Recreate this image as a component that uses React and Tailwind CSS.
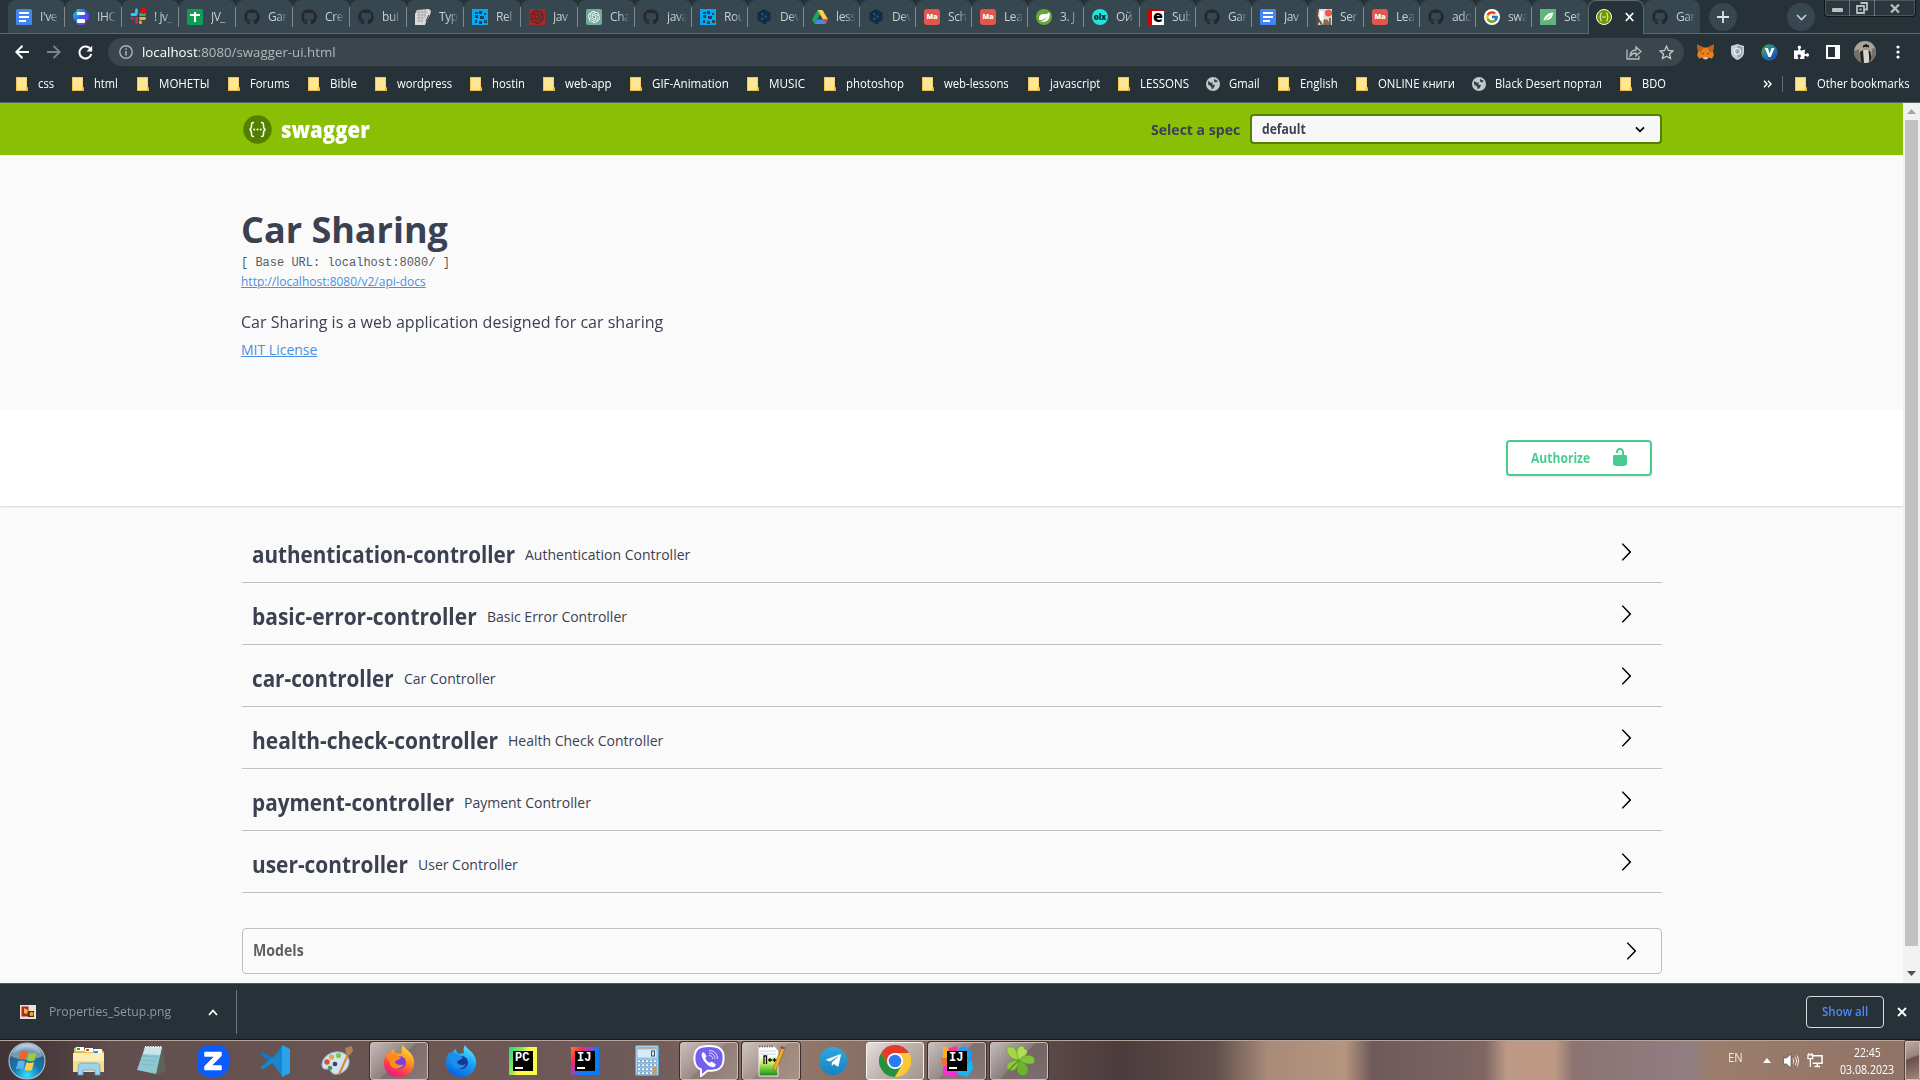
import React, { useLayoutEffect, useRef, useState } from "react";
import { FaGithub, FaPuzzlePiece, FaTelegramPlane } from "react-icons/fa";
import { FcGoogle } from "react-icons/fc";
import { SiOpenai } from "react-icons/si";

// Text squeezed or stretched horizontally to an exact width.
function Fit({ w, className = "", inner = "", children }) {
  const ref = useRef(null);
  const [scale, setScale] = useState(1);
  useLayoutEffect(() => {
    setScale(w / ref.current.offsetWidth);
  }, [w, children]);
  return (
    <span className={"inline-block shrink-0 whitespace-nowrap " + className} style={{ width: w }}>
      <span ref={ref} className={"inline-block origin-left " + inner} style={{ transform: `scaleX(${scale})` }}>
        {children}
      </span>
    </span>
  );
}

/* ---------- favicons ---------- */
const Docs = () => (
  <svg width="16" height="16" viewBox="0 0 16 16"><rect width="16" height="16" rx="1.5" fill="#4285f4" /><path d="M3 4h10M3 8h10M3 12h7" stroke="#fff" strokeWidth="2" /></svg>
);
const Printer = () => (
  <svg width="16" height="16" viewBox="0 0 16 16"><defs><linearGradient id="pr" x1="0" y1="0" x2="1" y2="1"><stop offset="0" stopColor="#12d7e6" /><stop offset=".5" stopColor="#3d5af0" /><stop offset="1" stopColor="#8a2be2" /></linearGradient></defs><rect y="2" width="16" height="11" rx="5" fill="url(#pr)" /><rect x="3" width="10" height="16" rx="3" fill="url(#pr)" /><rect x="4" y="3" width="8" height="3" rx="1" fill="#fff" /><rect x="4" y="10" width="8" height="4" rx="1" fill="#fff" /></svg>
);
const Slack = () => (
  <svg width="17" height="17" viewBox="0 0 17 17" strokeWidth="2.8" strokeLinecap="round"><path d="M2 6.5h4" stroke="#36c5f0" /><path d="M10.5 10.5h4" stroke="#ecb22e" /><path d="M10.5 6.5h4" stroke="#2eb67d" /><path d="M2 10.5h.5M6.5 10.5v4" stroke="#e01e5a" /><path d="M6.5 2v2.5" stroke="#36c5f0" /><path d="M10.5 14v.8" stroke="#ecb22e" /><circle cx="13.5" cy="3" r="3" fill="#f00" /></svg>
);
const Sheets = () => (
  <svg width="16" height="16" viewBox="0 0 16 16"><rect width="16" height="16" rx="1.5" fill="#0f9d58" /><path d="M3 6h10M8 3v10" stroke="#fff" strokeWidth="2" /></svg>
);
const Github = () => <FaGithub size={16} color="#24292e" />;
const Typing = () => (
  <svg width="16" height="16" viewBox="0 0 16 16"><path d="M2 1l12-1 2 2-1 4-4 7-1 3H0V5z" fill="#d9d9d9" /><path d="M2 3h10M2 6h9M2 9h7M2 12h6M4 1v12M7 1v12M10 1v8" stroke="#a3a3a3" strokeWidth=".8" /><path d="M11 12l3-6" stroke="#333" /></svg>
);
const Blocks = () => (
  <svg width="16" height="16" viewBox="0 0 16 16"><rect width="16" height="16" fill="#03a9f4" /><path d="M3 3h3v2H3zM7 2h3v3H7zM3 6h3v3H3zM8 7h4v3H8zM3 11h2v3H3zM7 12h3v3H7zM12 11h3v3h-3zM12 4h2v2h-2z" fill="#1c4557" /></svg>
);
const RedAi = () => (
  <span className="flex size-4 items-center justify-center bg-[#a52a25]"><SiOpenai size={14} color="#43272b" /></span>
);
const Gpt = () => (
  <span className="flex size-4 items-center justify-center rounded-[2px] bg-[#74aa9c]"><SiOpenai size={12} color="#fff" /></span>
);
const DeepL = () => (
  <svg width="16" height="16" viewBox="0 0 16 16"><path d="M8 0l6.500 3.700v7.300L10 13.600V16l-3.500-2L1.500 11V3.700z" fill="#0f2b46" /><path d="M6 5l4 2.500L6 10" fill="none" stroke="#284a6c" /><circle cx="6" cy="5" r="1" fill="#3a5c80" /><circle cx="10" cy="7.500" r="1" fill="#3a5c80" /><circle cx="6" cy="10" r="1" fill="#3a5c80" /></svg>
);
const Drive = () => (
  <svg width="16" height="16" viewBox="0 0 16 16"><path d="M5.500 1L0 10.500 2.700 15 8 5.500z" fill="#1fa463" /><path d="M5.500 1h5L16 10.500h-5z" fill="#ffd04b" /><path d="M5.300 10.500H16L13.300 15H2.700z" fill="#4688f4" /><path d="M11 10.500h5L13.300 15z" fill="#ea4335" /></svg>
);
const Mate = () => (
  <span className="flex size-4 items-center justify-center rounded-[3px] bg-[#e2574c] font-['Open_Sans'] text-[7px] font-extrabold leading-none text-white">Ma</span>
);
const Spring = () => (
  <svg width="16" height="16" viewBox="0 0 16 16"><circle cx="8" cy="8" r="8" fill="#68a63c" /><path d="M13.500 3c.8 5-.5 9.500-5.500 9.700-2 0-3.500-.3-4.500-.7 3 .2 6-1 7.500-4-2.500 2.500-5 3-7.700 3C2 6 5.500 4.800 9 5c2 0 3.500-.6 4.500-2z" fill="#fff" /></svg>
);
const Olx = () => (
  <span className="flex size-4 items-center justify-center rounded-full bg-[#23e5db] font-['Open_Sans'] text-[8px] font-extrabold leading-none text-[#002f34]">olx</span>
);
const RedE = () => (
  <span className="flex h-4 w-4 items-center justify-center border-l-[4px] border-t-[2px] border-[#d40000] bg-white pb-[3px] font-['Open_Sans'] text-[16px] font-extrabold leading-none text-black">e</span>
);
const Duke = () => (
  <svg width="16" height="16" viewBox="0 0 16 16"><rect width="16" height="16" fill="#ddd" /><path d="M0 0h3l-1 7 2 3-2 6H0z" fill="#5b4a42" /><path d="M8 10l4 1 2 5H7z" fill="#8b6b4a" /><path d="M5.500 2v9" stroke="#fff" strokeWidth="4" /><path d="M3 11l3 5M14 9v7" stroke="#5b4a42" strokeWidth="1.500" /><circle cx="12.500" cy="4" r="3.500" fill="#f25c45" /></svg>
);
const Leaf = () => (
  <svg width="16" height="16" viewBox="0 0 16 16"><rect width="16" height="16" fill="#5fb57a" /><path d="M3.500 12.500C4 7 8 4 13 3.500c0 4-2 7-6 7.500l-2 .3z" fill="#fff" /><path d="M4 12.500l6-6" stroke="#5fb57a" strokeWidth=".9" /></svg>
);
const SwaggerFav = () => (
  <svg width="16" height="16" viewBox="0 0 16 16"><circle cx="8" cy="8" r="7.500" fill="#6d9a00" stroke="#fff" /><path d="M6 4c-1.500 0-1.300 1-1.300 2S4.500 8 3.500 8c1 0 1.200 1 1.200 2S4.500 12 6 12M10 4c1.500 0 1.300 1 1.300 2S11.500 8 12.500 8c-1 0-1.200 1-1.200 2s.2 2-1.300 2M6 8h4" fill="none" stroke="#dcebb8" strokeWidth="1.100" /></svg>
);
const G = () => (
  <span className="flex size-4 items-center justify-center rounded-full bg-white"><FcGoogle size={14} /></span>
);

const TABS = [
  ["I've", Docs], ["IHC", Printer], ["! jv_", Slack], ["JV_", Sheets], ["Gar", Github], ["Cre", Github],
  ["bui", Github], ["Typ", Typing], ["Rel", Blocks], ["Jav", RedAi], ["Cha", Gpt], ["java", Github],
  ["Rou", Blocks], ["Dev", DeepL], ["less", Drive], ["Dev", DeepL], ["Sch", Mate], ["Lea", Mate],
  ["3. J", Spring], ["Ой", Olx], ["Sub", RedE], ["Gar", Github], ["Jav", Docs], ["Ser", Duke],
  ["Lea", Mate], ["add", Github], ["swa", G], ["Set", Leaf],
];

function Tab({ label, Icon, wide, last }) {
  return (
    <div className={"flex h-[33px] shrink-0 items-center rounded-t-[8px] bg-[#37474f] pl-2 " + (wide ? "w-[57px]" : "w-[56px]")}>
      <span className="flex w-[17px] shrink-0"><Icon /></span>
      <span className="ml-[7px] w-[22px] whitespace-nowrap text-[12px] leading-[18px] tracking-[-0.4px] text-[#c9cfd2] [mask-image:linear-gradient(to_right,#000_45%,transparent_90%)]">
        {label}
      </span>
      {!last && <span className="ml-auto h-5 w-px bg-[#7d878c]" />}
    </div>
  );
}

/* ---------- bookmarks: label, cell width, text width, icon ---------- */
const BOOKMARKS = [
  ["css", 56, 16], ["html", 65, 24], ["МОНЕТЫ", 91, 50], ["Forums", 80, 40], ["Bible", 67, 27],
  ["wordpress", 95, 55], ["hostin", 73, 33], ["web-app", 87, 47], ["GIF-Animation", 117, 77],
  ["MUSIC", 77, 36], ["photoshop", 98, 58], ["web-lessons", 106, 65], ["javascript", 90, 50],
  ["LESSONS", 88, 49], ["Gmail", 72, 31, true], ["English", 78, 38], ["ONLINE книги", 116, 77],
  ["Black Desert портал", 148, 107, true], ["BDO", 60, 24],
];
const Folder = () => (
  <svg width="12" height="14" viewBox="0 0 12 14"><path d="M0 0h11v10l1 .5V14H0z" fill="#e8bd43" /><path d="M.8.800h9.700v9L9.500 13H.800z" fill="#ffe692" /></svg>
);
const Globe = () => (
  <svg width="14" height="14" viewBox="0 0 14 14"><circle cx="7" cy="7" r="7" fill="#c3c8cb" /><path d="M2 4c1.500 1 2.500 2 5 1.500l-1 2 3 .5-1 2.500-2 2-1-3-3-2zM8 2l4 2-2 1.500-2-1z" fill="#37434a" /></svg>
);

function BrowserTop() {
  return (
    <header className="flex h-[103px] shrink-0 flex-col bg-[#263238] font-['Open_Sans','Noto_Sans',sans-serif]">
      <div className="flex h-[34px] shrink-0 border-b border-[#5c696f] pl-2">
        {TABS.map(([label, Icon], i) => <Tab key={i} label={label} Icon={Icon} wide={i < 12} last={i === 27} />)}
        <div className="flex h-[34px] w-[56px] shrink-0 items-center rounded-t-[8px] border-x border-t border-[#5c696f] bg-[#263238] pb-[2px] pl-[7px]">
          <SwaggerFav />
          <svg className="ml-[13px]" width="9" height="10" viewBox="0 0 9 10"><path d="M.8 1l7.400 8M8.200 1L.8 9" stroke="#fff" strokeWidth="1.700" /></svg>
        </div>
        <Tab label="Gar" Icon={Github} last />
        <div className="ml-[9px] mt-[3px] flex size-7 shrink-0 items-center justify-center rounded-full bg-[#37474f]">
          <svg width="12" height="12"><path d="M6 0v12M0 6h12" stroke="#dfe3e5" strokeWidth="1.800" /></svg>
        </div>
        <div className="ml-[50px] mt-[3px] flex size-7 shrink-0 items-center justify-center rounded-full bg-[#37474f]">
          <svg width="11" height="7"><path d="M1 1l4.500 4.500L10 1" fill="none" stroke="#c8ced1" strokeWidth="1.600" /></svg>
        </div>
        <div className="ml-[9px] flex h-[17px] w-[92px] shrink-0 divide-x divide-[#69757a] overflow-hidden rounded-b-[4px] border border-t-0 border-[#101518] bg-[#2b373d] shadow-[inset_0_0_0_1px_#4b585e]">
          <span className="flex w-[25px] items-end justify-center pb-[4px]"><span className="h-[4px] w-[11px] rounded-[1px] bg-[#b9bfc2]" /></span>
          <span className="flex w-[25px] items-center justify-center">
            <svg width="12" height="12"><path d="M4.500 1h6.500v6.500H8.500M1 4h7v7H1z" fill="none" stroke="#b9bfc2" strokeWidth="1.800" /><path d="M3.500 6.500h2v2h-2z" fill="#b9bfc2" /></svg>
          </span>
          <span className="flex flex-1 items-center justify-center">
            <svg width="10" height="9"><path d="M1 .5l8 8M9 .5l-8 8" stroke="#b9bfc2" strokeWidth="2.200" /></svg>
          </span>
        </div>
      </div>

      <div className="flex h-[36px] shrink-0 items-center">
        <svg className="ml-[15px]" width="14" height="14" viewBox="0 0 14 14"><path d="M14 7H1.500M7.500.8L1.300 7l6.200 6.200" fill="none" stroke="#fff" strokeWidth="2" /></svg>
        <svg className="ml-[18px]" width="14" height="14" viewBox="0 0 14 14"><path d="M0 7h12.500M6.500.8L12.700 7l-6.200 6.200" fill="none" stroke="#7b868b" strokeWidth="1.800" /></svg>
        <svg className="ml-[17px]" width="15" height="15" viewBox="0 0 15 15"><path d="M12.700 4.500A6 6 0 1 0 13.300 9" fill="none" stroke="#fff" strokeWidth="2" /><path d="M14.200.8v5.700H8.500z" fill="#fff" /></svg>
        <div className="ml-[15px] flex h-7 w-[1576px] items-center rounded-full bg-[#3b464c] pl-[11px] text-[13.500px]">
          <svg width="14" height="14" viewBox="0 0 14 14"><circle cx="7" cy="7" r="6.200" fill="none" stroke="#aeb5b9" strokeWidth="1.400" /><path d="M7 6v4.500M7 3.300v1.500" stroke="#aeb5b9" strokeWidth="1.500" /></svg>
          <Fit w={194} className="ml-[9px] leading-[28px] text-[#b0b8bc]">
            <span className="text-white">localhost</span>:8080/swagger-ui.html
          </Fit>
          <svg className="ml-auto" width="16" height="15" viewBox="0 0 16 15"><path d="M1 4.500V14h12v-3M4 11c.3-3.500 2.500-6 6-6V2l5 4.500-5 4.300V8C7.500 8 5.500 9 4 11z" fill="none" stroke="#b6bdc0" strokeWidth="1.300" /></svg>
          <svg className="ml-[17px] mr-[10px]" width="15" height="15" viewBox="0 0 15 15"><path d="M7.500 1.300l1.900 4.200 4.500.5-3.400 3 1 4.500-4-2.300-4 2.300 1-4.500-3.400-3 4.500-.5z" fill="none" stroke="#c4cace" strokeWidth="1.300" /></svg>
        </div>
        <svg className="ml-[13px]" width="17" height="16" viewBox="0 0 17 16"><path d="M0 .5l6.500 3h4L17 .5l-1 7 .8 4-1.800 3-3.500-.7L10 15.500H7L5.500 13.800 2 14.500l-1.800-3 .8-4z" fill="#e8811f" /><path d="M0 .5l6.500 3L4 8 1 7.500zM17 .5l-6.500 3L13 8l3-.5z" fill="#c3601a" /><path d="M4.500 8.500l2.500 1-.5 1zM12.500 8.500l-2.500 1 .5 1z" fill="#2b2f38" /><path d="M6.500 13h4v2h-4z" fill="#d9c6b8" /></svg>
        <svg className="ml-[17px]" width="13" height="16" viewBox="0 0 13 16"><path d="M6.500 0L13 2v6c0 4-3 6.500-6.500 8C3 14.500 0 12 0 8V2z" fill="#c8cfda" /><path d="M6.500 1.500L11.500 3v5c0 3-2.200 5-5 6.300z" fill="#96a0b5" /><circle cx="6.500" cy="7.500" r="3" fill="#9aa5b9" stroke="#eef1f5" strokeWidth="1.200" /></svg>
        <svg className="ml-[17px]" width="17" height="17" viewBox="0 0 17 17"><defs><linearGradient id="vg" x1="0" y1="0" x2="1" y2="1"><stop offset="0" stopColor="#55a83d" /><stop offset=".55" stopColor="#1d72b8" /><stop offset="1" stopColor="#263c9b" /></linearGradient></defs><circle cx="8.500" cy="8.500" r="8.200" fill="url(#vg)" /><path d="M3.800 4h3l2 5.500L10.500 4h3l-3.800 9H7.500z" fill="#fff" /></svg>
        <FaPuzzlePiece className="ml-[16px]" size={15} color="#fff" />
        <span className="ml-[17px] flex h-[14px] w-[14px] border-2 border-r-[5px] border-white" />
        <svg className="ml-[14px]" width="22" height="22" viewBox="0 0 22 22"><clipPath id="av"><circle cx="11" cy="11" r="11" /></clipPath><g clipPath="url(#av)"><rect width="22" height="22" fill="#aaa39b" /><path d="M0 22V10l5-2 2 14zM17 22l1-14 4-2v16z" fill="#77706a" /><path d="M9 4.500l3-1.500 3 1.500v2H9z" fill="#1c1a1a" /><path d="M10 6h4v3h-4z" fill="#b88f78" /><path d="M9.500 9h5l1 6-1 7H9L8 15z" fill="#d6d3d0" /><path d="M6 11l3-2 1 13H7zM14.500 9l2 2 1 6-2 5z" fill="#25211f" /></g></svg>
        <svg className="ml-[20px]" width="4" height="14"><circle cx="2" cy="2" r="1.600" fill="#fff" /><circle cx="2" cy="7" r="1.600" fill="#fff" /><circle cx="2" cy="12" r="1.600" fill="#fff" /></svg>
      </div>

      <div className="flex h-[33px] shrink-0 items-center border-b border-[#57656b] pb-[4px] pl-4 text-[12px] text-white">
        {BOOKMARKS.map(([label, cell, w, globe]) => (
          <div key={label} className="flex shrink-0 items-center" style={{ width: cell }}>
            <span className={globe ? "mr-[9px]" : "mr-[10px]"}>{globe ? <Globe /> : <Folder />}</span>
            <Fit w={w}>{label}</Fit>
          </div>
        ))}
        <svg className="ml-auto mr-[10px]" width="9" height="8"><path d="M1 .8L4 4 1 7.200M5 .8L8 4 5 7.200" fill="none" stroke="#fff" strokeWidth="1.400" /></svg>
        <span className="h-4 w-px bg-[#5f6c72]" />
        <span className="ml-3 mr-[10px]"><Folder /></span>
        <Fit w={93} className="mr-[10px]">Other bookmarks</Fit>
      </div>
    </header>
  );
}

/* ---------- swagger page ---------- */
const CONTROLLERS = [
  ["authentication-controller", 263, "Authentication Controller", 165],
  ["basic-error-controller", 225, "Basic Error Controller", 140],
  ["car-controller", 142, "Car Controller", 92],
  ["health-check-controller", 246, "Health Check Controller", 155],
  ["payment-controller", 202, "Payment Controller", 127],
  ["user-controller", 156, "User Controller", 100],
];

const Arrow = ({ className }) => (
  <svg className={className} width="20" height="20" viewBox="0 0 20 20">
    <path d="M13.250 10L6.109 2.580c-.268-.270-.268-.707 0-.979.268-.270.701-.270.969 0l7.830 7.908c.268.271.268.709 0 .979l-7.830 7.908c-.268.271-.701.270-.969 0-.268-.269-.268-.707 0-.979L13.250 10z" />
  </svg>
);

function SwaggerPage() {
  return (
    <main className="h-[880px] w-[1903px] shrink-0 overflow-hidden bg-[#fafafa] font-['Open_Sans',sans-serif] text-[#3b4151]">
      <div className="flex h-[52px] items-center bg-[#89bf04] pl-[241px] pr-[241px]">
        <svg className="ml-[2px]" width="29" height="29" viewBox="0 0 29 29">
          <circle cx="14.500" cy="14.500" r="14.200" fill="#547f00" />
          <path d="M11 7.500c-2.500 0-2.500.8-2.500 3 0 2.500 0 3.500-2 4 2 .5 2 1.500 2 4 0 2.200 0 3 2.500 3M18 7.500c2.500 0 2.500.8 2.500 3 0 2.500 0 3.500 2 4-2 .5-2 1.500-2 4 0 2.200 0 3-2.500 3" fill="none" stroke="#fff" strokeWidth="1.500" />
          <g fill="#fff"><circle cx="11.200" cy="14.500" r="1" /><circle cx="14.500" cy="14.500" r="1" /><circle cx="17.800" cy="14.500" r="1" /></g>
        </svg>
        <Fit w={89} className="ml-[9px] text-[22px] font-extrabold leading-[30px] text-white">swagger</Fit>
        <Fit w={89} className="ml-auto text-[15px] font-bold">Select a spec</Fit>
        <div className="ml-[10px] flex h-[30px] w-[412px] items-center rounded-[4px] border-2 border-[#547f00] bg-[#f7f7f7] pl-[10px] pr-[15px]">
          <Fit w={44} className="text-[13.500px] font-bold">default</Fit>
          <svg className="ml-auto" width="10" height="7" viewBox="0 0 10 7"><path d="M1 1.300l4 4 4-4" fill="none" stroke="#000" strokeWidth="1.700" /></svg>
        </div>
      </div>

      <section className="flex h-[255px] flex-col items-start pl-[241px] pt-[50px]">
        <h1 className="text-[36px] font-bold leading-[49px]"><Fit w={207}>Car Sharing</Fit></h1>
        <p className="mt-px font-['Liberation_Mono',monospace] text-[12px] leading-[16px] text-[#555a68]">[ Base URL: localhost:8080/ ]</p>
        <a className="mt-[2px] text-[12px] leading-[17px] text-[#4990e2]"><Fit w={185} inner="underline">http://localhost:8080/v2/api-docs</Fit></a>
        <p className="mt-[20px] text-[16px] leading-[24px]"><Fit w={422}>Car Sharing is a web application designed for car sharing</Fit></p>
        <a className="mt-[6px] text-[14px] leading-[19px] text-[#4990e2]"><Fit w={76} inner="underline">MIT License</Fit></a>
      </section>

      <section className="flex h-[96px] justify-end bg-white pr-[251px] pt-[30px] shadow-[0_1px_2px_rgba(0,0,0,0.15)]">
        <div className="flex h-9 w-[146px] items-center rounded-[4px] border-2 border-[#49cc90] pl-[23px] text-[#49cc90] shadow-[0_1px_2px_rgba(0,0,0,0.1)]">
          <Fit w={59} className="text-[13.500px] font-bold">Authorize</Fit>
          <svg className="mb-[3px] ml-[20px]" width="20" height="20" viewBox="0 0 20 20" fill="#49cc90"><path d="M15.800 8H14V5.600C14 2.703 12.665 1 10 1 7.334 1 6 2.703 6 5.600V6h2v-.801C8 3.754 8.797 3 10 3c1.203 0 2 .754 2 2.199V8H4c-.553 0-1 .646-1 1.199V17c0 .549.428 1.139.951 1.307l1.197.387C5.672 18.861 6.550 19 7.100 19h5.800c.549 0 1.428-.139 1.951-.307l1.196-.387c.524-.167.953-.757.953-1.306V9.199C17 8.646 16.352 8 15.800 8z" /></svg>
        </div>
      </section>

      <section className="ml-[242px] mr-[241px] pt-[15px]">
        {CONTROLLERS.map(([name, w, desc, dw]) => (
          <div key={name} className="flex h-[62px] items-center border-b border-[#bfc0c6] pl-[10px]">
            <Fit w={w} className="mt-[4px] text-[23px] font-bold leading-[32px]">{name}</Fit>
            <Fit w={dw} className="ml-[10px] mt-[6px] text-[14px] leading-[20px]">{desc}</Fit>
            <Arrow className="ml-auto mr-[26px]" />
          </div>
        ))}
        <div className="mt-[35px] flex h-[46px] items-center rounded-[4px] border border-[#bebfc2] pl-[10px]">
          <Fit w={51} className="text-[15.500px] font-bold text-[#606060]">Models</Fit>
          <Arrow className="ml-auto mr-[20px]" />
        </div>
      </section>
    </main>
  );
}

function Scrollbar() {
  return (
    <div className="flex h-[880px] w-[17px] shrink-0 flex-col items-center bg-[#f1f1f1]">
      <svg className="mt-[6px]" width="9" height="5"><path d="M4.500 0L9 5H0z" fill="#a3a3a3" /></svg>
      <span className="mt-[6px] h-[826px] w-[13px] bg-[#c1c1c1]" />
      <svg className="mb-[7px] mt-auto" width="9" height="5"><path d="M0 0h9L4.500 5z" fill="#505050" /></svg>
    </div>
  );
}

/* ---------- taskbar icons ---------- */
const Orb = () => (
  <svg width="38" height="38" viewBox="0 0 38 38"><defs><radialGradient id="orb" cx=".5" cy=".9" r=".85"><stop offset="0" stopColor="#35e0ff" /><stop offset=".45" stopColor="#1576b0" /><stop offset=".8" stopColor="#2b6187" /><stop offset="1" stopColor="#a9c4d4" /></radialGradient></defs><circle cx="19" cy="19" r="18" fill="url(#orb)" stroke="#a3bac6" strokeWidth="1.200" /><path d="M3 14a17 17 0 0 1 32 0c-8 4-24 5-32 0z" fill="#fff" opacity=".35" /><path d="M12.500 9.500c2.500-1 4.500-.8 7 .5L17.500 18c-2.500-1.300-4.500-1.400-7-.5z" fill="#f0642c" /><path d="M21 10.700c2.300 1 4.500 1 7.500-.2L26.500 18.500c-2.500 1-5 1-7.500 0z" fill="#9ccb3b" /><path d="M10 19.200c2.500-1 4.500-.8 7 .4l-2 8c-2.500-1.300-4.500-1.400-7-.5z" fill="#5eb5ee" /><path d="M18.500 20.300c2.300 1 4.500 1 7.500-.2l-2 8c-2.500 1-5 1-7.500 0z" fill="#fcd045" /></svg>
);
const Explorer = () => (
  <svg width="34" height="30" viewBox="0 0 34 30"><path d="M2 2l5-1 2 2h20l3 3v18H2z" fill="#e2bd56" /><path d="M4 1h8v4H4zM13 2h8v4h-8zM22 3h8v4h-8z" fill="#fdfdfa" /><path d="M5 2h3v2H5z" fill="#19b52a" /><path d="M14 3h3v2h-3z" fill="#d44a37" /><path d="M22 5h4v2h-4z" fill="#1c8ff0" /><path d="M1 7h31v19H1z" fill="#f6df8c" /><path d="M1 7h31v8H1z" fill="#fbeeb4" /><path d="M6 29v-8c0-3 2-4 4-4h14c2 0 4 1 4 4v8h-5v-5H11v5z" fill="#9bd3ee" stroke="#5d9fc4" strokeWidth=".7" /></svg>
);
const Notepad = () => (
  <svg width="32" height="30" viewBox="0 0 32 30"><path d="M10 2l18 1 3 22-9 4z" fill="#60635a" /><path d="M10 1h17l-6 27L2 24z" fill="#8ec8d2" /><path d="M10 1h17l-2 8-17-1z" fill="#c9e6ea" /><path d="M8 10l15 1M6.500 14l15 1M5 18l15 1.500" stroke="#7ebac5" /><path d="M10 1h17" stroke="#eee" strokeWidth="2" strokeDasharray="1.500 1" /></svg>
);
const Zed = () => (
  <svg width="32" height="32" viewBox="0 0 32 32"><rect width="32" height="32" rx="12" fill="#0b5cff" /><path d="M8 7.500h16v3L13.500 21H24v3.500H8v-3L18.500 11H8z" fill="#fff" stroke="#fff" strokeWidth="1.500" strokeLinejoin="round" /></svg>
);
const Code = () => (
  <svg width="32" height="32" viewBox="0 0 32 32"><path d="M23 1l-9.500 12L4 7 1 9l18 15 4 7z" fill="#0f7ac4" /><path d="M23 31l-9.500-13L4 24.500 1 22.500 19 8l4-7z" fill="#1785cf" /><path d="M23 0l8 4v24l-8 4z" fill="#2aa3ea" /></svg>
);
const Paint = () => (
  <svg width="32" height="32" viewBox="0 0 32 32"><path d="M14 7C6 8 0 15 1 21c1 5 5 2 8 4 2 3 3 5 8 4 7-1 12-8 11-14C27 9 21 6 14 7z" fill="#cfe3f0" stroke="#8fb0c6" /><circle cx="6" cy="17" r="2.700" fill="#dd4b34" /><circle cx="10.500" cy="12" r="2.600" fill="#e8a63a" /><circle cx="17.500" cy="10.500" r="2.600" fill="#7fc744" /><circle cx="9" cy="23" r="2.300" fill="#3f9d4f" /><circle cx="14" cy="19" r="2.300" fill="#3c444a" /><path d="M17 29L26 9l2 1-9 20z" fill="#e2882b" /><path d="M24 3l7-2 1 5-3 4-4-1z" fill="#b28158" /></svg>
);
const Fox = ({ blue }) => (
  <svg width="32" height="32" viewBox="0 0 32 32">
    <defs>
      <linearGradient id="fxw" x1=".8" y1="0" x2=".3" y2="1"><stop offset="0" stopColor="#ffe53d" /><stop offset=".4" stopColor="#ff9a1f" /><stop offset=".75" stopColor="#ff3b4e" /><stop offset="1" stopColor="#e31587" /></linearGradient>
      <linearGradient id="fxb" x1=".8" y1="0" x2=".3" y2="1"><stop offset="0" stopColor="#5ff0ff" /><stop offset=".45" stopColor="#17a3f5" /><stop offset="1" stopColor="#0b60dd" /></linearGradient>
    </defs>
    <path d="M20 0c1 4 9 6 11 15 1.500 9-5 17-15 17S0 25 1 16c.3-4 2-7 4-9l1 3c1-3 3-5 5-6 0 2 1 4 3 5l5-1c-1-3 0-6 1-8z" fill={blue ? "url(#fxb)" : "url(#fxw)"} />
    <circle cx="16.500" cy="17.500" r="6.500" fill={blue ? "#17388f" : "#7a3fe0"} />
    <path d="M3 10c4-3 8-2 10 0l5 2c-1 3-5 3-6 5 1 3 6 4 9 2-3 6-12 6-14 0z" fill={blue ? "#1b8ff0" : "#ff8a1c"} />
  </svg>
);
const Screen = ({ text }) => (
  <span className="relative flex size-5 flex-col bg-black pl-[2px] pt-px font-['Liberation_Mono',monospace] text-[12px] font-bold leading-[12px] text-white">
    {text}<span className="mt-[3px] h-[2px] w-2 bg-white" />
  </span>
);
const JetBox = ({ text, className }) => (
  <span className={"flex size-7 items-center justify-center " + className}><Screen text={text} /></span>
);
const Calc = () => (
  <svg width="24" height="31" viewBox="0 0 24 31"><rect x=".5" y=".5" width="23" height="30" rx="1.500" fill="#a9d2ee" stroke="#5a9fce" /><path d="M2 2h20v1.500H2z" fill="#f2a03c" /><rect x="2" y="4" width="20" height="9" fill="#d8ebf7" stroke="#6ea5ca" strokeWidth=".6" /><rect x="16.500" y="6" width="3" height="5" fill="none" stroke="#356" /><g fill="#fff" stroke="#5a8eb8" strokeWidth=".6">{[15, 19, 23, 27].map((y) => [2.5, 6.5, 10.5, 14.5, 18.5].map((x) => <rect key={x + "-" + y} x={x} y={y} width="2.800" height="2.500" />))}</g><rect x="18.500" y="22" width="3" height="7" fill="#f2902c" /></svg>
);
const ViberIcon = () => (
  <svg width="32" height="32" viewBox="0 0 32 32"><path d="M10 1.500c4-.7 8-.7 12 0 5 1 8 4 8.500 9 .3 3 0 6-1 9-1.500 4-4.500 5.500-9 6-2 .3-4 .3-6 .2L8 31v-6.500c-4-1.500-6-4-6.500-9-.2-3-.2-5 .5-7 1-4 4-6.500 8-7z" fill="#7360f2" stroke="#fff" strokeWidth="2" /><path d="M9 8c1-1 2-1 2.500 0l1.700 2.500c.5 1 0 1.500-.8 2.200-.5 1 3 5 4.500 5 .8-.7 1.500-1.300 2.500-.7l2.700 1.700c1 .8.5 2-.5 3C17 24.500 7 14 9 8z" fill="#fff" /><path d="M16 8c4 0 6 2.500 6 6M16 5.500c5 0 8.500 3.200 8.500 8.500M16 10.500c2.500 0 3.500 1.200 3.700 3.500" fill="none" stroke="#e4defc" strokeWidth="1" /></svg>
);
const Npp = () => (
  <svg width="32" height="32" viewBox="0 0 32 32"><defs><linearGradient id="np" x1="0" y1="0" x2="0" y2="1"><stop offset=".3" stopColor="#fff" /><stop offset=".55" stopColor="#cdf06a" /><stop offset=".85" stopColor="#45b52a" /><stop offset="1" stopColor="#1f7d1e" /></linearGradient></defs><path d="M4 1.500h15l4 4.500v25H4z" fill="url(#np)" stroke="#eee" /><path d="M4 1.500h15" stroke="#555" strokeWidth="1.600" strokeDasharray="1.500 1" /><path d="M5 6h16M5 9h16" stroke="#b8ccd4" strokeWidth=".8" /><path d="M9 19v-8h2.500v8M13 15h4M15 13v4M17.500 15h4M19.500 13v4" stroke="#111" strokeWidth="1.300" fill="none" /><path d="M18 26l1-5L27 2l3 1.500L21.500 24z" fill="#efaf2b" stroke="#9b6411" strokeWidth=".6" /><path d="M26 1l4 1.500-1 2L25.500 3z" fill="#b23c3c" /></svg>
);
const Telegram = () => (
  <span className="flex size-7 items-center justify-center rounded-full bg-gradient-to-b from-[#2fa8e0] to-[#1583c2]"><FaTelegramPlane size={17} color="#fff" /></span>
);
const ChromeIcon = () => (
  <svg width="32" height="32" viewBox="0 0 32 32"><circle cx="16" cy="16" r="16" fill="#fbc116" /><path d="M16 8h13.860A16 16 0 0 0 2.140 8l6.930 12z" fill="#e33b2e" /><path d="M2.140 8a16 16 0 0 0 13.860 24l6.930-12-13.860 0z" fill="#229342" /><path d="M16 32A16 16 0 0 0 29.860 8H16l6.930 12z" fill="#fcc934" /><circle cx="16" cy="16" r="8" fill="#fff" /><circle cx="16" cy="16" r="6.300" fill="#2a7af0" /></svg>
);
const Idea = () => (
  <span className="relative flex size-8 items-center justify-center">
    <svg className="absolute inset-0" width="32" height="32" viewBox="0 0 32 32"><path d="M2 1l6 3-2 8-4 1z" fill="#ffb11b" /><path d="M8 3l8-2 2 10H6z" fill="#ff318c" /><path d="M16 5l6-4 8 5v12L20 16z" fill="#1e9df5" /><path d="M0 13l8 1-1 8-6-3z" fill="#ff6a2b" /><path d="M2 22l8-3 8 9-6 4-10-2z" fill="#f52fd0" /><path d="M15 26l16-10 1 8-6 8-8-2z" fill="#18b5f2" /></svg>
    <Screen text="IJ" />
  </span>
);
const Clover = () => (
  <svg width="34" height="32" viewBox="0 0 34 32"><g stroke="#5b9a24" strokeWidth=".5"><path d="M17 15C10 17 2 13 2 8c1-4 6-4 8-2 3 2 6 5 7 9z" fill="#a5d64a" transform="rotate(18 17 15)" /><path d="M17 15c-5-6-5-12-1-14 3-1 4 1 4 2 4-1 6 5-3 12z" fill="#b3dc55" transform="rotate(12 17 15)" /><path d="M17 15c5-6 12-6 15-2 2 5-1 6-4 6s-8-1-11-4z" fill="#82c238" /><path d="M17 15c6 2 11 8 8 13-3 4-5 2-6 2-4 0-5-8-2-15z" fill="#6cb32e" /><path d="M17 15c-1 8-5 12-9 10-3-1-4-3-3-5 2-3 6-5 12-5z" fill="#8cc83c" /></g><path d="M17 15L3 29" stroke="#5a8f2a" strokeWidth="1.300" /></svg>
);

const TASKS = [
  [Explorer], [Notepad], [Zed], [Code], [Paint], [() => <Fox />, "open"], [() => <Fox blue />],
  [() => <JetBox text="PC" className="bg-[linear-gradient(115deg,#21d789_0%,#8be45a_35%,#fcf84a_50%)]" />],
  [() => <JetBox text="IJ" className="bg-[linear-gradient(125deg,#fc801d_0%,#fe2857_25%,#a040c0_42%,#087cfa_60%)]" />],
  [Calc], [ViberIcon, "open"], [Npp, "open"], [Telegram], [ChromeIcon, "active"], [Idea, "open"], [Clover, "open"],
];

function Taskbar() {
  return (
    <footer className="flex h-10 shrink-0 items-center border-t border-[#b9a49b] bg-[linear-gradient(to_right,#403335_0px,#4c3d3e_60px,#624e4e_110px,#6b5654_400px,#6e5a59_640px,#91766a_800px,#8b7165_850px,#6e5c5b_960px,#5a4848_1055px,#4c3b3c_1120px,#5f4e4c_1215px,#a98b79_1268px,#b5957f_1345px,#6f595b_1372px,#7f6665_1485px,#bd9a85_1507px,#bd9985_1555px,#8b7372_1573px,#927d82_1692px,#9b7d6c_1712px,#8f7264_1920px)] font-['Open_Sans','Noto_Sans',sans-serif] text-[12px] text-white shadow-[0_-1px_0_#17191c]">
      <span className="flex w-[58px] shrink-0 pl-2"><Orb /></span>
      {TASKS.map(([Icon, state], i) => (
        <span key={i} className="flex h-full w-[62px] shrink-0 items-center justify-center">
          <span
            className={
              "flex h-[38px] w-[58px] items-center justify-center " +
              (state === "active"
                ? "rounded-[3px] border border-[#f5f1ef] bg-[linear-gradient(135deg,#e6dfdd,#bdb2ae_50%,#a3958f)]"
                : state === "open"
                  ? "rounded-[3px] border border-[#cbbcb8] bg-[linear-gradient(135deg,rgba(255,255,255,.6),rgba(255,255,255,.25)_48%,rgba(255,255,255,.14)_50%,rgba(255,255,255,.2))] shadow-[0_0_0_1px_#3a2e2e]"
                  : "")
            }
          >
            <Icon />
          </span>
        </span>
      ))}
      <Fit w={15} className="mb-[6px] ml-auto mr-[20px] text-[#efeae7]">EN</Fit>
      <svg width="8" height="5"><path d="M4 0l4 5H0z" fill="#fff" /></svg>
      <svg className="ml-[12px]" width="16" height="16" viewBox="0 0 16 16"><path d="M.5 5h3L8 1v14l-4.500-4h-3z" fill="#fff" stroke="#4b3f3b" strokeWidth=".6" /><path d="M10 5.500c1 1.500 1 3.500 0 5M12 4c2 2.500 2 5.500 0 8M14 2.500c2 3.500 2 7.500 0 11" fill="none" stroke="#f3efed" strokeWidth="1" /></svg>
      <svg className="ml-[8px]" width="16" height="15" viewBox="0 0 17 16"><path d="M5 3h11v8H6M8 14.500h6M11 11v3" fill="none" stroke="#fff" strokeWidth="1.600" /><path d="M1 2h5v4H1zM2 0v2M5 0v2M3.500 6v9" fill="none" stroke="#fff" strokeWidth="1.300" /></svg>
      <span className="ml-[17px] flex flex-col items-center leading-[17px]">
        <Fit w={27}>22:45</Fit>
        <Fit w={54}>03.08.2023</Fit>
      </span>
      <span className="ml-[11px] h-full w-[15px] rounded-[1px] border border-[#d1bdb4] bg-[linear-gradient(160deg,#bda79f,#9b8379_40%,#66504a_45%,#a58474)] shadow-[0_0_0_1px_#51413d]" />
    </footer>
  );
}

export default function App() {
  return (
    <div className="flex h-[1080px] w-[1920px] flex-col overflow-hidden bg-[#263238]">
      <BrowserTop />
      <div className="flex h-[880px] shrink-0">
        <SwaggerPage />
        <Scrollbar />
      </div>
      <div className="flex h-[57px] shrink-0 items-center border-t border-[#4d5b61] bg-[#263238] pl-5 font-['Open_Sans',sans-serif] text-[12px]">
        <svg width="16" height="14" viewBox="0 0 16 14"><rect width="16" height="14" fill="#e8e2d8" /><path d="M1.500 1.500h7v10h-7z" fill="#b3261e" /><path d="M4 3l4 2-1 4-3-1z" fill="#f3b53c" /><path d="M8 6h6v6H8z" fill="#3a2a1c" /><circle cx="11.500" cy="9" r="2.200" fill="#f0a020" /></svg>
        <Fit w={122} className="ml-[13px] text-[12.500px] text-[#8f989d]">Properties_Setup.png</Fit>
        <svg className="ml-[37px]" width="10" height="7"><path d="M1 6l4-4.500L9 6" fill="none" stroke="#fff" strokeWidth="1.800" /></svg>
        <span className="ml-[18px] h-[44px] w-px bg-[#6b777c]" />
        <div className="ml-auto flex h-8 w-[78px] items-center justify-center rounded-[4px] border border-[#d5dadc] font-semibold text-[#4f8bf5]">
          <Fit w={46}>Show all</Fit>
        </div>
        <svg className="ml-[13px] mr-[13px]" width="10" height="10"><path d="M1 1l8 8M9 1L1 9" stroke="#fff" strokeWidth="1.900" /></svg>
      </div>
      <Taskbar />
    </div>
  );
}
